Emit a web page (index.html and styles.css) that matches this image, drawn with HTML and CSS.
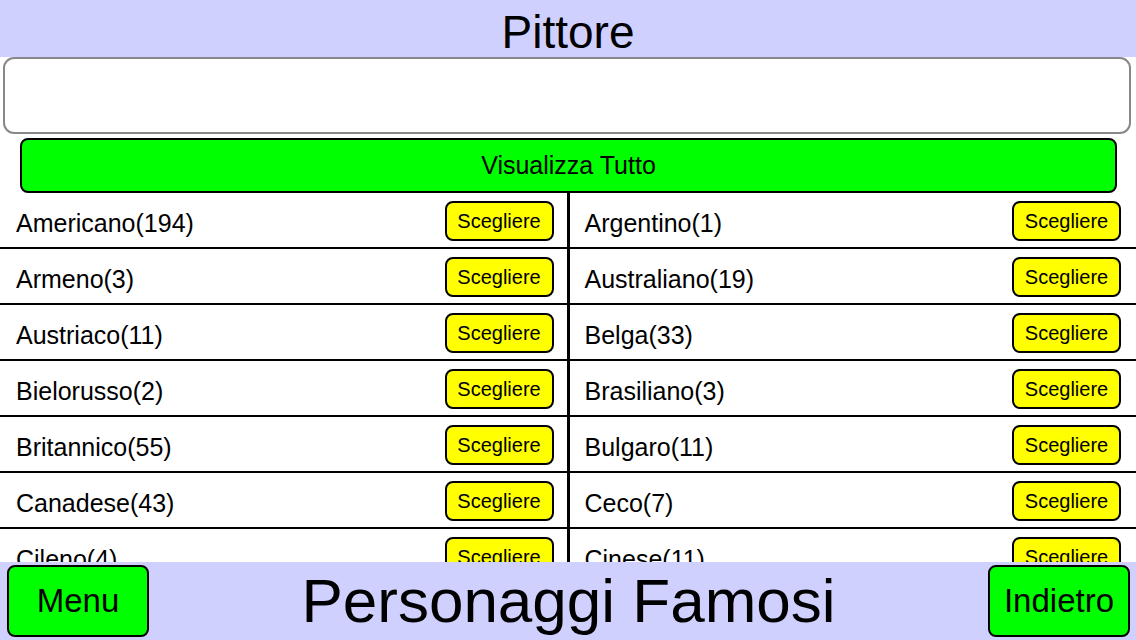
FILE: index.html
```html
<!DOCTYPE html>
<html lang="it">

<head>
    <meta charset="utf-8"/>
    <title>Personaggi Famosi - Pittore</title>
    <meta name="viewport" content="width=device-width, initial-scale=1">
    <link rel="stylesheet" href="styles.css">
</head>
<body>
<header class="top-bar">
    <h1 class="title">Pittore</h1>
</header>

<div class="search-wrap">
    <input class="search-field" type="text" name="search">
</div>

<div class="show-all-wrap">
    <button class="show-all">Visualizza Tutto</button>
</div>

<div class="list">
    <ul class="col">
        <li class="row"><span class="name">Americano(194)</span><button class="pick">Scegliere</button></li>
        <li class="row"><span class="name">Armeno(3)</span><button class="pick">Scegliere</button></li>
        <li class="row"><span class="name">Austriaco(11)</span><button class="pick">Scegliere</button></li>
        <li class="row"><span class="name">Bielorusso(2)</span><button class="pick">Scegliere</button></li>
        <li class="row"><span class="name">Britannico(55)</span><button class="pick">Scegliere</button></li>
        <li class="row"><span class="name">Canadese(43)</span><button class="pick">Scegliere</button></li>
        <li class="row"><span class="name">Cileno(4)</span><button class="pick">Scegliere</button></li>
        <li class="row"><span class="name">Croato(2)</span><button class="pick">Scegliere</button></li>
    </ul>
    <ul class="col">
        <li class="row"><span class="name">Argentino(1)</span><button class="pick">Scegliere</button></li>
        <li class="row"><span class="name">Australiano(19)</span><button class="pick">Scegliere</button></li>
        <li class="row"><span class="name">Belga(33)</span><button class="pick">Scegliere</button></li>
        <li class="row"><span class="name">Brasiliano(3)</span><button class="pick">Scegliere</button></li>
        <li class="row"><span class="name">Bulgaro(11)</span><button class="pick">Scegliere</button></li>
        <li class="row"><span class="name">Ceco(7)</span><button class="pick">Scegliere</button></li>
        <li class="row"><span class="name">Cinese(11)</span><button class="pick">Scegliere</button></li>
        <li class="row"><span class="name">Cubano(3)</span><button class="pick">Scegliere</button></li>
    </ul>
</div>

<footer class="bottom-bar">
    <button class="nav-btn">Menu</button>
    <div class="app-name">Personaggi Famosi</div>
    <button class="nav-btn">Indietro</button>
</footer>
</body>
</html>
```

FILE: styles.css
```css
html {
    font-family: "Liberation Sans", Arial, Helvetica, sans-serif;
}
body {
    margin: 0;
    width: 1136px;
    height: 640px;
    overflow: hidden;
    display: flex;
    flex-direction: column;
    background: #fff;
    color: #000;
}
button {
    font-family: inherit;
    color: #000;
    cursor: pointer;
}
.top-bar {
    height: 57px;
    flex: none;
    background: #d0d0ff;
    display: flex;
    align-items: center;
    justify-content: center;
}
.title {
    margin: 0;
    padding-top: 6px;
    font-size: 46px;
    font-weight: normal;
    line-height: 1;
}
.search-wrap {
    flex: none;
    padding: 0 5px 0 3px;
}
.search-field {
    display: block;
    width: 100%;
    height: 77px;
    box-sizing: border-box;
    border: 2px solid #888;
    border-radius: 11px;
    background: #fff;
    outline: none;
}
.show-all-wrap {
    flex: none;
    padding: 4px 19px 0 20px;
}
.show-all {
    display: block;
    width: 100%;
    height: 55px;
    border: 2px solid #000;
    border-radius: 8px;
    background: #00ff00;
    font-size: 25px;
}
.list {
    flex: 1;
    min-height: 0;
    overflow: hidden;
    display: flex;
}
.col {
    flex: 1 1 0;
    margin: 0;
    padding: 0;
    list-style: none;
}
.col + .col {
    border-left: 3px solid #000;
}
.row {
    height: 54px;
    border-bottom: 2px solid #000;
    display: flex;
    align-items: center;
    justify-content: space-between;
    padding: 0 13px 0 16px;
    font-size: 25px;
}
.col + .col .row {
    padding: 0 15px 0 15px;
}
.name {
    padding-top: 6px;
}
.pick {
    width: 109px;
    height: 40px;
    margin-top: 2px;
    border: 2px solid #000;
    border-radius: 8px;
    background: #ffff00;
    font-size: 20px;
    padding: 0;
}
.bottom-bar {
    height: 78px;
    flex: none;
    background: #d0d0ff;
    display: flex;
    align-items: center;
    padding: 0 6px 0 7px;
}
.nav-btn {
    width: 142px;
    height: 72px;
    border: 2px solid #000;
    border-radius: 8px;
    background: #00ff00;
    font-size: 33px;
    padding: 0;
}
.app-name {
    flex: 1;
    text-align: center;
    font-size: 62px;
    line-height: 1;
}
```
